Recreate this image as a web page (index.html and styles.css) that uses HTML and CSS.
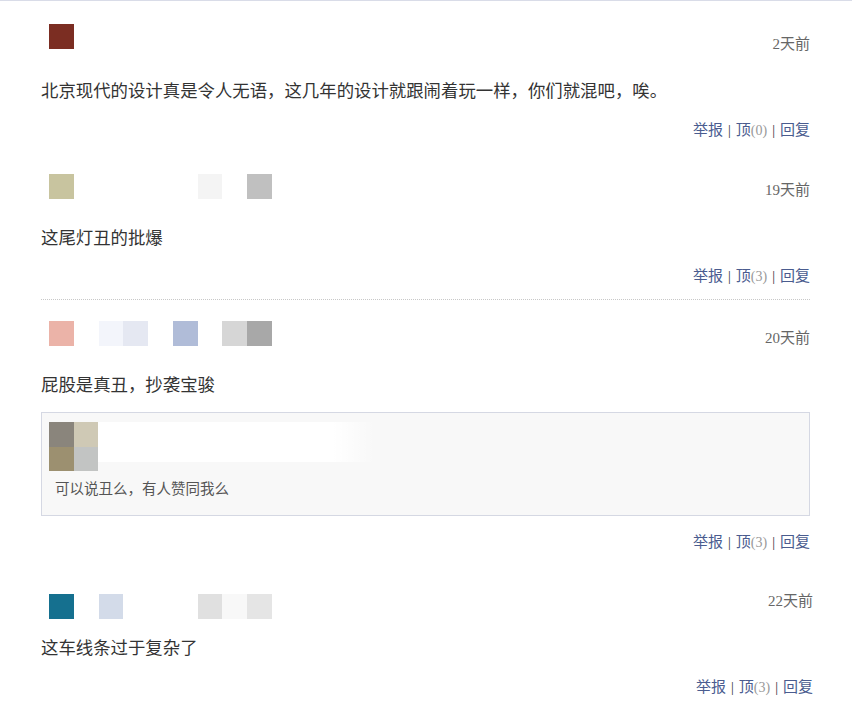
FILE: index.html
```html
<!DOCTYPE html>
<html lang="zh-CN">
<head>
    <meta charset="UTF-8">
    <meta name="viewport" content="width=device-width, initial-scale=1.0">
    <title>评论</title>
    <link rel="stylesheet" href="styles.css">
</head>
<body>
    <div class="comments">

        <div class="comment first">
            <div class="head">
                <div class="avatar">
                    <span class="px rust"></span>
                </div>
                <span class="time">2天前</span>
            </div>
            <p class="text">北京现代的设计真是令人无语，这几年的设计就跟闹着玩一样，你们就混吧，唉。</p>
            <div class="actions">
                <a href="#">举报</a><span class="sep">|</span><a href="#">顶<span class="count">(0)</span></a><span class="sep">|</span><a href="#">回复</a>
            </div>
        </div>

        <div class="comment second">
            <div class="head">
                <div class="avatar">
                    <span class="px khaki"></span>
                    <span class="px"></span><span class="px"></span><span class="px"></span><span class="px"></span><span class="px"></span>
                    <span class="px snow"></span>
                    <span class="px"></span>
                    <span class="px silver"></span>
                </div>
                <span class="time">19天前</span>
            </div>
            <p class="text">这尾灯丑的批爆</p>
            <div class="actions">
                <a href="#">举报</a><span class="sep">|</span><a href="#">顶<span class="count">(3)</span></a><span class="sep">|</span><a href="#">回复</a>
            </div>
        </div>

        <div class="comment third">
            <div class="head">
                <div class="avatar">
                    <span class="px salmon"></span>
                    <span class="px"></span>
                    <span class="px ice"></span>
                    <span class="px mist"></span>
                    <span class="px"></span>
                    <span class="px steel"></span>
                    <span class="px"></span>
                    <span class="px ash"></span>
                    <span class="px grey"></span>
                </div>
                <span class="time">20天前</span>
            </div>
            <p class="text">屁股是真丑，抄袭宝骏</p>
            <div class="quote">
                <div class="quote-head">
                    <div class="quote-avatar">
                        <span class="px taupe"></span>
                        <span class="px sand"></span>
                        <span class="px olive"></span>
                        <span class="px pale"></span>
                    </div>
                    <div class="quote-name"></div>
                </div>
                <p class="quote-text">可以说丑么，有人赞同我么</p>
            </div>
            <div class="actions">
                <a href="#">举报</a><span class="sep">|</span><a href="#">顶<span class="count">(3)</span></a><span class="sep">|</span><a href="#">回复</a>
            </div>
        </div>

        <div class="comment fourth">
            <div class="head">
                <div class="avatar">
                    <span class="px teal"></span>
                    <span class="px"></span>
                    <span class="px frost"></span>
                    <span class="px"></span><span class="px"></span><span class="px"></span>
                    <span class="px smoke"></span>
                    <span class="px faint"></span>
                    <span class="px cloud"></span>
                </div>
                <span class="time">22天前</span>
            </div>
            <p class="text">这车线条过于复杂了</p>
            <div class="actions">
                <a href="#">举报</a><span class="sep">|</span><a href="#">顶<span class="count">(3)</span></a><span class="sep">|</span><a href="#">回复</a>
            </div>
        </div>

    </div>
</body>
</html>
```

FILE: styles.css
```css
* {
    margin: 0;
    padding: 0;
    box-sizing: border-box;
}

body {
    font-family: "Liberation Serif", "Noto Sans CJK SC", serif;
    background: #fff;
    color: #333;
    border-top: 1px solid #d9dce8;
}

.comments {
    width: 769px;
    margin-left: 41px;
}

.head {
    display: flex;
    justify-content: space-between;
    align-items: flex-start;
    height: 25px;
}

.avatar {
    display: flex;
    padding-left: 8px;
}

.px {
    display: block;
    width: 24.75px;
    height: 25px;
}

.time {
    font-size: 15px;
    line-height: 20px;
    color: #666;
    padding-top: 7px;
}

.text {
    font-size: 17.4px;
    line-height: 24px;
    color: #333;
    margin-top: 27px;
}

.actions {
    text-align: right;
    font-size: 15px;
    line-height: 20px;
    margin-top: 16px;
}

.actions a {
    color: #4a5c8f;
    text-decoration: none;
}

.actions .sep {
    color: #333;
    font-size: 14px;
    margin: 0 5px;
}

.actions .count {
    color: #999;
    font-size: 14px;
}

/* per comment spacing */
.first {
    padding-top: 23px;
}
.first .time {
    padding-top: 10px;
}
.first .text {
    margin-top: 30px;
}
.first .actions {
    margin-top: 17px;
}

.second {
    padding-top: 33px;
    padding-bottom: 12px;
    border-bottom: 1px dotted #c8c8c8;
}
.second .time {
    padding-top: 6px;
}

.third {
    padding-top: 21px;
}

.fourth {
    padding-top: 41px;
}
.fourth .head {
    margin-right: -3px;
}
.fourth .time {
    padding-top: 0;
    margin-top: -3px;
}
.fourth .text {
    margin-top: 17px;
}
.fourth .actions {
    margin-top: 17px;
    margin-right: -3px;
}

/* quoted reply */
.quote {
    margin-top: 15px;
    height: 104px;
    background: #f8f8f8;
    border: 1px solid #d5d8e3;
    padding: 9px 0 0 7px;
}

.quote-head {
    display: flex;
    align-items: flex-start;
}

.quote-avatar {
    display: grid;
    grid-template-columns: 24.5px 24.5px;
}

.quote-avatar .px {
    width: 24.5px;
    height: 24.5px;
}

.quote-name {
    width: 277px;
    height: 40px;
    background: linear-gradient(to right, #fff 85%, rgba(255, 255, 255, 0));
}

.quote-text {
    font-size: 14.5px;
    line-height: 20px;
    color: #555;
    margin: 8px 0 0 6px;
}

/* pixel colours */
.rust { background: #7b2d22; }
.khaki { background: #c8c49f; }
.snow { background: #f4f4f4; }
.silver { background: #c0c0c0; }
.salmon { background: #ebb3a8; }
.ice { background: #f3f5fb; }
.mist { background: #e5e8f2; }
.steel { background: #b0bcd8; }
.ash { background: #d6d6d6; }
.grey { background: #a8a8a8; }
.taupe { background: #8a857c; }
.sand { background: #cfc9b5; }
.olive { background: #9c9070; }
.pale { background: #c2c4c3; }
.teal { background: #15708f; }
.frost { background: #d3dbe9; }
.smoke { background: #e0e0e0; }
.faint { background: #f8f8f8; }
.cloud { background: #e5e5e5; }
```
